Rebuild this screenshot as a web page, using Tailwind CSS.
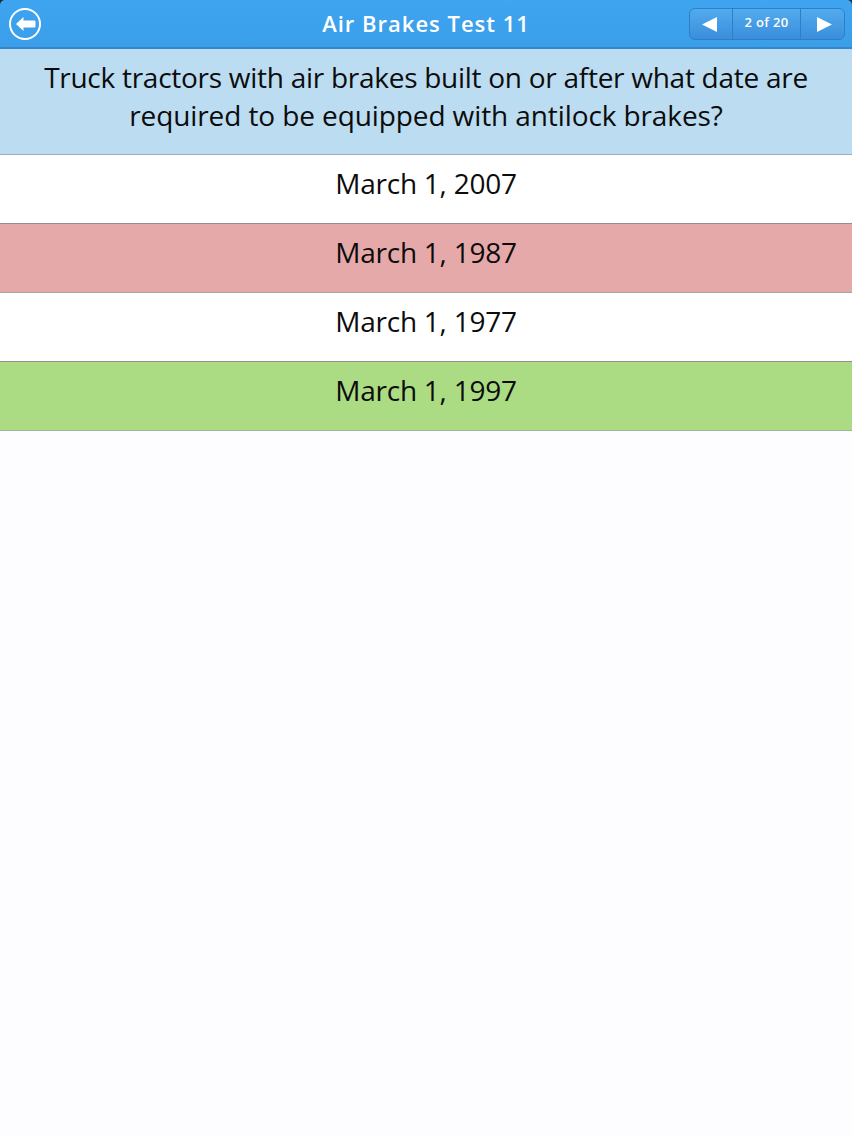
<!DOCTYPE html>
<html lang="en">
<head>
    <meta charset="UTF-8">
    <title>Air Brakes Test 11</title>
    <script src="https://cdn.jsdelivr.net/npm/@tailwindcss/browser@4"></script>
</head>
<body class="w-[852px] h-[1136px] overflow-hidden bg-[#fdfcfe] font-['Open_Sans',sans-serif] text-[#0c0c0c]">
    <!-- Header -->
    <div class="bg-[#1c2a38]">
    <header class="h-[49px] relative flex items-center justify-center rounded-t-[5px] bg-gradient-to-b from-[#3fa5f0] to-[#3a9ee9] border-b-2 border-[#3585cb]">
        <button class="absolute left-[9px] top-[8px] w-[32px] h-[32px] rounded-full border-2 border-white flex items-center justify-center">
            <svg class="w-[20px] h-[14px] ml-[1px]" viewBox="0 0 20 14"><path d="M0 7 L7.500 0 V3.500 H18.500 Q19.500 3.500 19.500 4.500 V9.500 Q19.500 10.500 18.500 10.500 H7.500 V14 Z" fill="#fff"/></svg>
        </button>
        <h1 class="text-white text-[22px] font-semibold tracking-[1px] leading-none -mt-[1px]">Air Brakes Test 11</h1>
        <div class="absolute left-[689px] top-[8px] w-[156px] h-[32px] rounded-[6px] border border-[#2f7fc6] bg-gradient-to-b from-[#52abee] to-[#3a8edb] flex text-white">
            <div class="w-[43px] flex items-center justify-center border-r border-[#2f7fc6] pr-[4px]">
                <svg class="w-[15px] h-[15px]" viewBox="0 0 15 15"><path d="M0 7.500 L15 0 V15 Z" fill="#fff"/></svg>
            </div>
            <div class="flex-1 flex items-start justify-center pt-[5px] text-[13px] font-semibold tracking-[0.3px] leading-[16px]">2 of 20</div>
            <div class="w-[44px] flex items-center justify-center border-l border-[#2f7fc6] pl-[4px]">
                <svg class="w-[15px] h-[15px]" viewBox="0 0 15 15"><path d="M15 7.500 L0 0 V15 Z" fill="#fff"/></svg>
            </div>
        </div>
    </header>
    </div>

    <!-- Question -->
    <div class="h-[106px] bg-[#bcdcf1] border-b border-[#9ab0bd] pt-[9px] text-center text-[28px] leading-[38px]">
        <p class="tracking-[-0.27px]">Truck tractors with air brakes built on or after what date are</p>
        <p class="tracking-[-0.1px]">required to be equipped with antilock brakes?</p>
    </div>

    <!-- Answers -->
    <div class="flex flex-col text-center text-[28px] tracking-[-0.25px]">
        <div class="h-[69px] bg-white border-b border-[#8f8f8f] pt-[8px] leading-[40px]">March 1, 2007</div>
        <div class="h-[69px] bg-[#e6a9a9] border-b border-[#a5a5a5] pt-[8px] leading-[40px]">March 1, 1987</div>
        <div class="h-[69px] bg-white border-b border-[#8f8f8f] pt-[8px] leading-[40px]">March 1, 1977</div>
        <div class="h-[69px] bg-[#abdb82] border-b border-[#9fb59a] pt-[8px] leading-[40px]">March 1, 1997</div>
    </div>
</body>
</html>
